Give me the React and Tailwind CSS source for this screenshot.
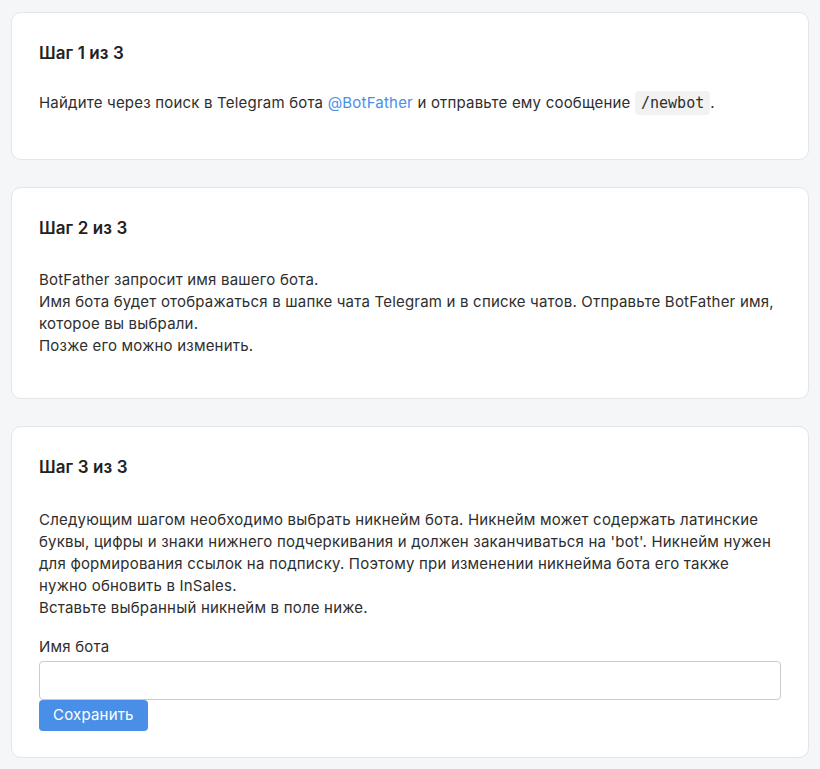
export default function App() {
  const font = { fontFamily: 'Inter, "Noto Sans", sans-serif' };
  return (
    <div className="min-h-[769px] bg-[#f5f6f8] px-[11px] pt-[12px] pb-[11px] text-[#2e2e2e]" style={font}>
      <div className="flex flex-col gap-[27px]">
        <section className="rounded-[10px] border border-[#e3e5e8] bg-white px-[27px] pt-[28px] pb-[29px]">
          <h2 className="text-[17px] font-semibold leading-[24px] tracking-[0.1px] text-[#222]">Шаг 1 из 3</h2>
          <p className="mt-[27px] mb-[16px] text-[15px] leading-[22px] tracking-[0.2px]">
            Найдите через поиск в Telegram бота{' '}
            <a className="text-[#4a8fe7]">@BotFather</a> и отправьте ему сообщение{' '}
            <code className="rounded-[4px] bg-[#f2f2f2] px-[6px] py-[3px] font-['DejaVu_Sans_Mono',monospace] text-[15px] tracking-normal">/newbot</code>.
          </p>
        </section>

        <section className="rounded-[10px] border border-[#e3e5e8] bg-white px-[27px] pt-[28px] pb-[27px]">
          <h2 className="text-[17px] font-semibold leading-[24px] tracking-[0.1px] text-[#222]">Шаг 2 из 3</h2>
          <p className="mt-[29px] mb-[14px] text-[15px] leading-[22px] tracking-[0.2px]">
            BotFather запросит имя вашего бота.
            <br />
            Имя бота будет отображаться в шапке чата Telegram и в списке чатов. Отправьте BotFather имя, которое вы выбрали.
            <br />
            Позже его можно изменить.
          </p>
        </section>

        <section className="rounded-[10px] border border-[#e3e5e8] bg-white px-[27px] pt-[28px] pb-[26px]">
          <h2 className="text-[17px] font-semibold leading-[24px] tracking-[0.1px] text-[#222]">Шаг 3 из 3</h2>
          <p className="mt-[30px] text-[15px] leading-[22px] tracking-[0.2px]">
            Следующим шагом необходимо выбрать никнейм бота. Никнейм может содержать латинские буквы, цифры и знаки нижнего подчеркивания и должен заканчиваться на 'bot'. Никнейм нужен для формирования ссылок на подписку. Поэтому при изменении никнейма бота его также нужно обновить в InSales.
            <br />
            Вставьте выбранный никнейм в поле ниже.
          </p>
          <label className="mt-[17px] block text-[15px] leading-[22px] tracking-[0.2px]">Имя бота</label>
          <input
            type="text"
            className="mt-[3px] block h-[39px] w-full rounded-[4px] border border-[#c9cbce] bg-white px-3 text-[15px] outline-none"
          />
          <button className="block h-[31px] rounded-[4px] bg-[#4a8fe7] px-[14px] text-[15px] tracking-[0.2px] text-white">
            Сохранить
          </button>
        </section>
      </div>
    </div>
  );
}
